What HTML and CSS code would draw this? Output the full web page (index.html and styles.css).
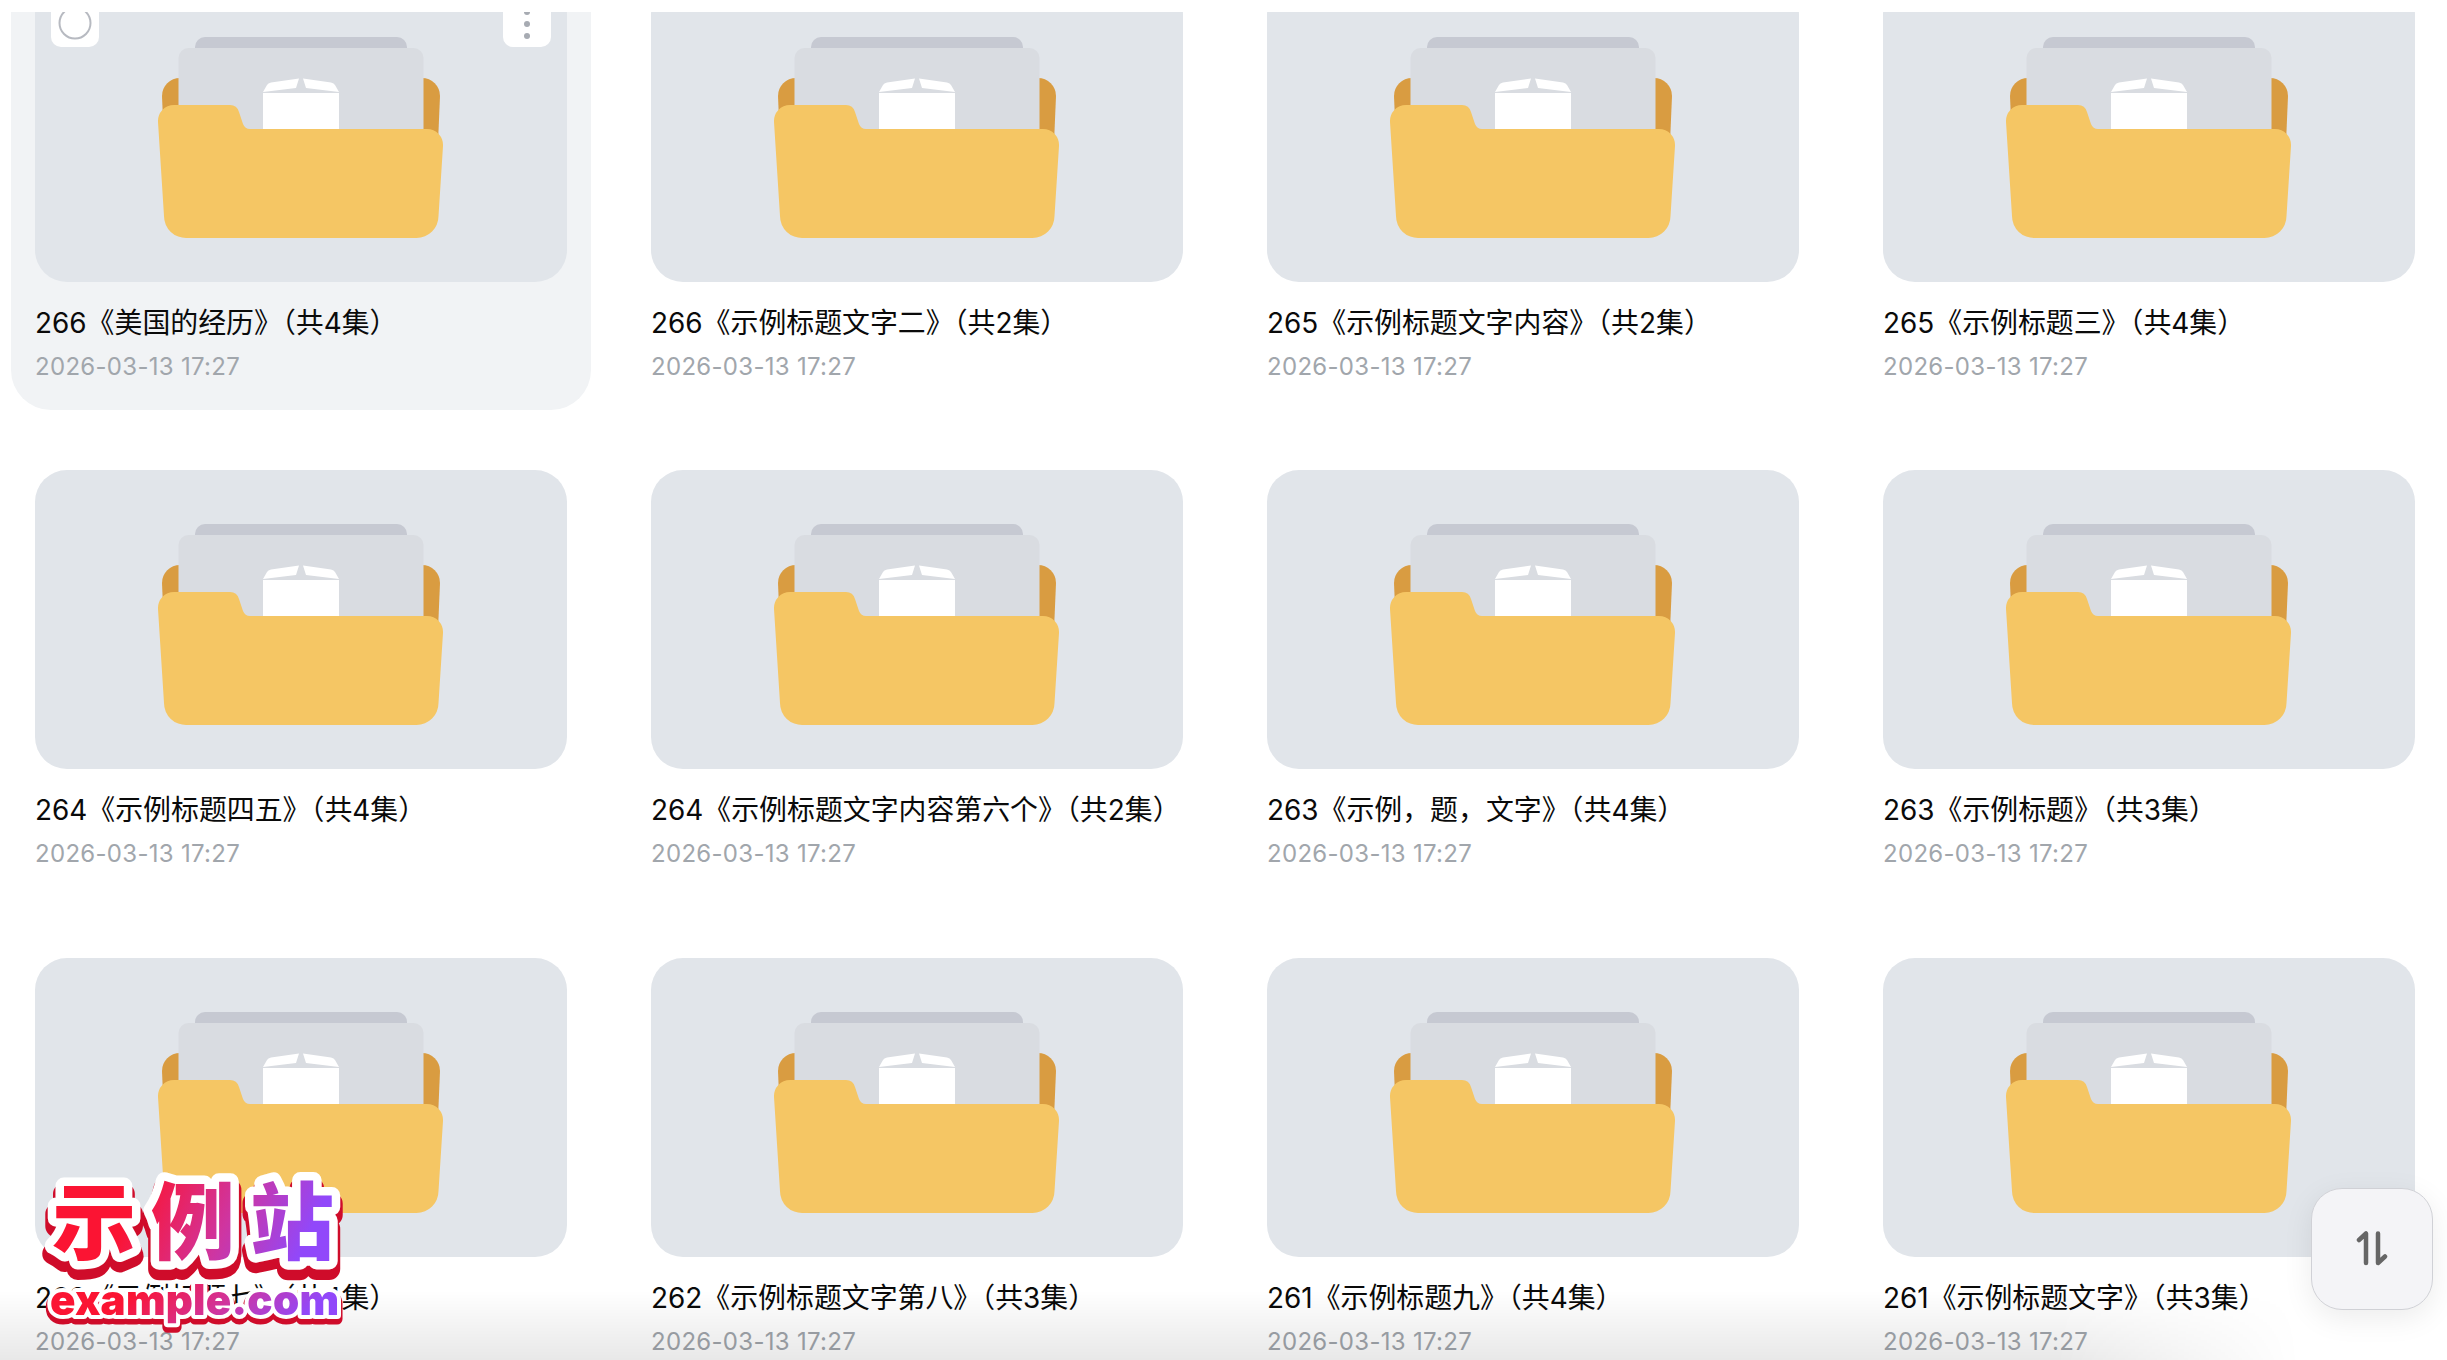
FILE: index.html
```html
<!DOCTYPE html>
<html lang="zh-CN">
<head>
  <meta charset="UTF-8">
  <title>Files</title>
  <link rel="stylesheet" href="styles.css">
</head>
<body>

<svg width="0" height="0" class="defs">
  <symbol id="folder" viewBox="0 0 532 299">
    <path fill="#c6c9d2" d="M160 66V64a10 10 0 0 1 10-10H362a10 10 0 0 1 10 10v2z"/>
    <path fill="#d99c41" d="M145 95a18 18 0 0 0-18 18l2 47h274l2-47a18 18 0 0 0-18-18z"/>
    <path fill="#d9dce1" d="M143.500 150V75a10 10 0 0 1 10-10H378.500a10 10 0 0 1 10 10v75z"/>
    <path fill="#fff" d="M228 110H304V150H228zM228 109l4-7q1-2 4-2.500l28-4-3 9.500zM304 109l-4-7q-1-2-4-2.500l-28-4 3 9.500z"/>
    <path fill="#f5c664" d="M123 139a16 16 0 0 1 16-17H195q7 0 9 7l4 12q2 5 7 5H392a16 16 0 0 1 16 17l-4.500 70a22 22 0 0 1-22 22H152a22 22 0 0 1-23-22z"/>
  </symbol>
</svg>

<main class="viewport">
  <div class="grid" id="grid"></div>
</main>

<div class="fade"></div>

<div class="logo">
  <svg width="300" height="165" viewBox="0 0 300 165">
    <defs>
      <linearGradient id="ink" x1="0" y1="0" x2="1" y2="0.2">
        <stop offset="0.35" stop-color="#fb1433"/>
        <stop offset="0.7" stop-color="#cf35a0"/>
        <stop offset="1" stop-color="#9148fa"/>
      </linearGradient>
    </defs>
    <g class="logo-name">
      <text class="edge" x="8" y="89" textLength="282">示例站</text>
      <text class="rim" x="8" y="81" textLength="282">示例站</text>
      <text class="ink" x="8" y="81" textLength="282">示例站</text>
    </g>
    <g class="logo-url">
      <text class="edge" x="6" y="147" textLength="289">example.com</text>
      <text class="rim" x="6" y="143" textLength="289">example.com</text>
      <text class="ink" x="6" y="143" textLength="289">example.com</text>
    </g>
  </svg>
</div>

<button class="sort" aria-label="Sort">
  <svg width="32" height="36" viewBox="0 0 32 36">
    <path d="M3 10L10 3.500V33M22 3.500V33L29 26.500"/>
  </svg>
</button>

<script>
  const folders = [
    '266《美国的经历》（共4集）',
    '266《示例标题文字二》（共2集）',
    '265《示例标题文字内容》（共2集）',
    '265《示例标题三》（共4集）',
    '264《示例标题四五》（共4集）',
    '264《示例标题文字内容第六个》（共2集）',
    '263《示例，题，文字》（共4集）',
    '263《示例标题》（共3集）',
    '262《示例标题七》（共4集）',
    '262《示例标题文字第八》（共3集）',
    '261《示例标题九》（共4集）',
    '261《示例标题文字》（共3集）'
  ];

  const tools = `
    <span class="tool check"><svg width="48" height="54"><circle cx="24" cy="30" r="15.500"/></svg></span>
    <span class="tool more"><svg width="48" height="54"><circle cx="24" cy="19" r="3"/><circle cx="24" cy="31" r="3"/><circle cx="24" cy="43" r="3"/></svg></span>`;

  document.getElementById('grid').innerHTML = folders.map((name, i) => `
    <div class="card ${i === 0 ? 'active' : ''}">
      <div class="thumb"><svg class="folder"><use href="#folder"/></svg>${i === 0 ? tools : ''}</div>
      <div class="name">${name}</div>
      <div class="date">2026-03-13 17:27</div>
    </div>`).join('');
</script>

</body>
</html>
```
FILE: styles.css
```css
* {
  box-sizing: border-box;
}
body {
  margin: 0;
  padding-top: 12px;
  height: 1360px;
  overflow: hidden;
  background: #fff;
  font-family: Inter, "Noto Sans CJK SC", sans-serif;
}
.defs {
  position: absolute;
}
.viewport {
  height: 1348px;
  overflow: hidden;
}
.grid {
  display: grid;
  grid-template-columns: repeat(4, 580px);
  grid-auto-rows: 451px;
  column-gap: 36px;
  row-gap: 36.4px;
  margin: -53px 0 0 11px;
}
.card {
  padding: 24px;
  border-radius: 40px;
}
.card.active {
  background: #f1f3f5;
}
.thumb {
  position: relative;
  height: 299px;
  border-radius: 32px;
  background: #e1e5ea;
}
.folder {
  display: block;
  width: 532px;
  height: 299px;
}
.name {
  margin-top: 21px;
  font-size: 27.9px;
  line-height: 40px;
  color: #0a0a0a;
  white-space: nowrap;
}
.date {
  margin-top: 4px;
  font-size: 24px;
  line-height: 40px;
  letter-spacing: 0.3px;
  color: #a1a6ac;
}
.tool {
  position: absolute;
  top: 10px;
  width: 48px;
  height: 54px;
  border-radius: 10px;
  background: #fff;
}
.check {
  left: 16px;
}
.more {
  right: 16px;
}
.check circle {
  fill: none;
  stroke: #b7bac1;
  stroke-width: 2;
}
.more circle {
  fill: #a7abb2;
}
.fade {
  position: fixed;
  left: 0;
  right: 0;
  bottom: 0;
  height: 70px;
  background: linear-gradient(rgba(0, 0, 0, 0), rgba(0, 0, 0, 0.09));
  -webkit-mask-image: linear-gradient(to right, #000 84%, transparent 94%);
  mask-image: linear-gradient(to right, #000 84%, transparent 94%);
}
.logo {
  position: fixed;
  left: 44px;
  top: 1172px;
}
.logo svg {
  overflow: visible;
}
.logo text {
  font-weight: 900;
  stroke-linejoin: round;
}
.logo-name {
  font-family: "Noto Sans CJK SC", sans-serif;
  font-size: 84px;
}
.logo-url {
  font-family: Inter, sans-serif;
  font-size: 42px;
}
.edge {
  fill: #cf0c2a;
  stroke: #cf0c2a;
  stroke-width: 22px;
}
.rim {
  fill: #fff;
  stroke: #fff;
  stroke-width: 17px;
}
.logo-url .edge {
  stroke-width: 11px;
}
.logo-url .rim {
  stroke-width: 8px;
}
.ink {
  fill: url(#ink);
}
.sort {
  position: fixed;
  left: 2311px;
  top: 1188px;
  display: flex;
  align-items: center;
  justify-content: center;
  width: 122px;
  height: 122px;
  padding: 0 0 3px;
  border: 1px solid #d0d1d6;
  border-radius: 31px;
  background: #f4f4f7;
  box-shadow: 0 8px 30px rgba(0, 0, 0, 0.08);
}
.sort path {
  fill: none;
  stroke: #666;
  stroke-width: 4.5;
  stroke-linecap: round;
  stroke-linejoin: round;
}
```
